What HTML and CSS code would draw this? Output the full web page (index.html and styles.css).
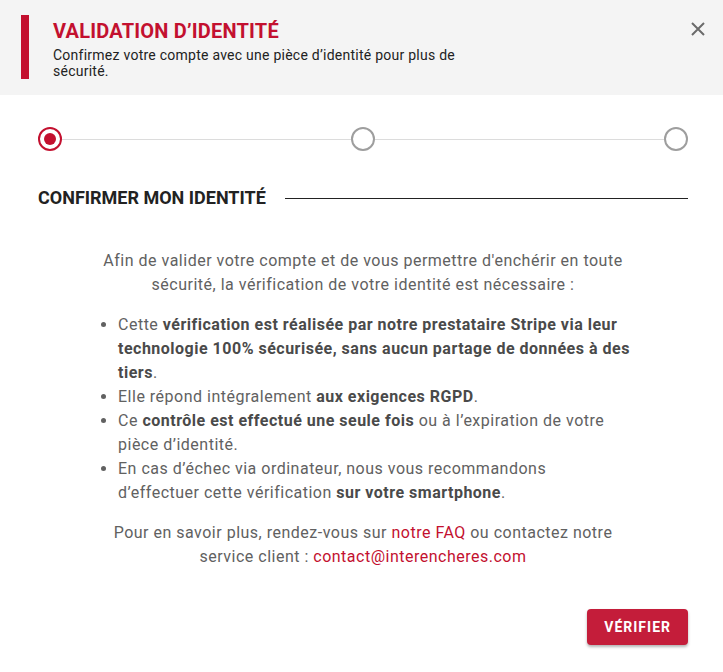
FILE: index.html
```html
<!DOCTYPE html>
<html lang="fr">
<head>
    <meta charset="UTF-8">
    <meta name="viewport" content="width=device-width, initial-scale=1.0">
    <title>Validation d'identité</title>
    <link rel="stylesheet" href="styles.css">
</head>
<body>
    <div class="modal">
        <div class="modal-header">
            <div class="header-title">
                <h1>VALIDATION D’IDENTITÉ</h1>
                <p>Confirmez votre compte avec une pièce d’identité pour plus de sécurité.</p>
            </div>
            <button class="close" aria-label="Fermer">
                <svg width="14" height="14" viewBox="0 0 14 14">
                    <path d="M1 1 L13 13 M13 1 L1 13" stroke="#6b6b6b" stroke-width="2" fill="none"/>
                </svg>
            </button>
        </div>

        <div class="modal-body">
            <div class="stepper">
                <span class="step active"></span>
                <span class="step-line"></span>
                <span class="step"></span>
                <span class="step-line"></span>
                <span class="step"></span>
            </div>

            <div class="section-title">
                <h2>CONFIRMER MON IDENTITÉ</h2>
                <span class="section-rule"></span>
            </div>

            <div class="content">
                <p>Afin de valider votre compte et de vous permettre d'enchérir en toute sécurité, la vérification de votre identité est nécessaire :</p>
                <ul>
                    <li>Cette <b>vérification est réalisée par notre prestataire Stripe via leur technologie 100% sécurisée, sans aucun partage de données à des tiers</b>.</li>
                    <li>Elle répond intégralement <b>aux exigences RGPD</b>.</li>
                    <li>Ce <b>contrôle est effectué une seule fois</b> ou à l’expiration de votre pièce d’identité.</li>
                    <li>En cas d’échec via ordinateur, nous vous recommandons d’effectuer cette vérification <b>sur votre smartphone</b>.</li>
                </ul>
                <p>Pour en savoir plus, rendez-vous sur <a href="#">notre FAQ</a> ou contactez notre service client : <a href="#">contact@interencheres.com</a></p>
            </div>

            <div class="actions">
                <button class="btn-verify">VÉRIFIER</button>
            </div>
        </div>
    </div>
</body>
</html>
```

FILE: styles.css
```css
body {
    margin: 0;
    font-family: Roboto, "Liberation Sans", sans-serif;
    background-color: #fff;
    color: #616161;
}
.modal {
    width: 723px;
    height: 672px;
    background: #fff;
}
.modal-header {
    background-color: #f4f4f4;
    padding: 15px 0 16px 21px;
    display: flex;
    justify-content: space-between;
    align-items: flex-start;
}
.header-title {
    border-left: 8px solid #c3102f;
    padding: 4px 0 0 24px;
    width: 420px;
}
.header-title h1 {
    margin: 0;
    font-size: 20px;
    line-height: 24px;
    font-weight: 700;
    letter-spacing: 0.2px;
    color: #c3102f;
}
.header-title p {
    margin: 4px 0 0;
    font-size: 14px;
    line-height: 16px;
    letter-spacing: 0.25px;
    color: #222;
}
.close {
    background: none;
    border: none;
    padding: 0;
    margin: 7px 18px 0 0;
    width: 14px;
    height: 14px;
    cursor: pointer;
}
.close svg {
    display: block;
}
.modal-body {
    padding: 32px 35px 0 38px;
}
.stepper {
    display: flex;
    align-items: center;
}
.step {
    width: 20px;
    height: 20px;
    border: 2px solid #9e9e9e;
    border-radius: 50%;
    background: #fff;
    box-sizing: content-box;
    position: relative;
}
.step.active {
    border-color: #c3102f;
}
.step.active::after {
    content: "";
    position: absolute;
    left: 4px;
    top: 4px;
    width: 12px;
    height: 12px;
    border-radius: 50%;
    background: #c3102f;
}
.step-line {
    flex: 1;
    height: 1px;
    background: #dcdcdc;
}
.section-title {
    display: flex;
    align-items: center;
    margin-top: 36px;
}
.section-title h2 {
    margin: 0;
    font-size: 18px;
    line-height: 22px;
    font-weight: 700;
    color: #222;
    white-space: nowrap;
}
.section-rule {
    flex: 1;
    height: 1px;
    background: #222;
    margin-left: 19px;
}
.content {
    width: 536px;
    margin: 40px auto 0;
    font-size: 16px;
    line-height: 24px;
    letter-spacing: 0.5px;
}
.content p {
    margin: 0;
    text-align: center;
}
.content ul {
    margin: 16px 0;
    padding-left: 23px;
}
.content b {
    color: #4a4a4a;
}
.content a {
    color: #c3102f;
    text-decoration: none;
}
.actions {
    display: flex;
    justify-content: flex-end;
    margin-top: 40px;
}
.btn-verify {
    background-color: #c41d3a;
    color: #fff;
    border: none;
    border-radius: 4px;
    height: 36px;
    padding: 0 17px;
    font-family: Roboto, "Liberation Sans", sans-serif;
    font-size: 14px;
    font-weight: 700;
    letter-spacing: 1px;
    box-shadow: 0 2px 3px rgba(0, 0, 0, 0.3);
    cursor: pointer;
}
```
